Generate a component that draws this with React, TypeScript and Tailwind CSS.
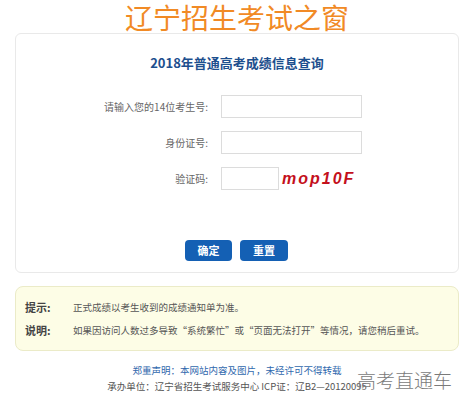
import React from "react";

const cjk = { fontFamily: '"Microsoft YaHei", "Noto Sans CJK SC", sans-serif' };

function Field({ label, inputClass }: { label: string; inputClass: string }) {
  return (
    <div className="flex h-[23px] items-center">
      <div className="w-[205px] pr-[13px] text-right text-[10px] text-[#666]">{label}</div>
      <div className={`h-[23px] border border-[#dcdcdc] bg-white ${inputClass}`} />
    </div>
  );
}

export default function App() {
  return (
    <div className="relative h-[408px] w-[474px] overflow-hidden bg-white" style={cjk}>
      {/* Header */}
      <div className="pt-[1px] text-center text-[28px] leading-[32px] text-[#f18a25]">辽宁招生考试之窗</div>

      {/* Query card */}
      <div className="mx-[15px] h-[240px] rounded-[6px] border border-[#e9e9e9] bg-white">
        <div className="pt-[19px] text-center text-[13px] font-bold leading-[20px] text-[#1d4f8e]">
          2018年普通高考成绩信息查询
        </div>
        <div className="mt-[22px] flex flex-col gap-[13px]">
          <Field label="请输入您的14位考生号:" inputClass="w-[141px]" />
          <Field label="身份证号:" inputClass="w-[141px]" />
          <div className="flex h-[23px] items-center">
            <div className="w-[205px] pr-[13px] text-right text-[10px] text-[#666]">验证码:</div>
            <div className="h-[23px] w-[58px] border border-[#dcdcdc] bg-white" />
            <span
              className="ml-[3px] text-[16px] font-bold italic tracking-[2px] text-[#c4101c]"
              style={{ fontFamily: '"Liberation Sans", Arial, sans-serif' }}
            >
              mop10F
            </span>
          </div>
        </div>
        <div className="mt-[50px] flex justify-center gap-[8px] pr-[1px]">
          <button className="h-[21px] w-[47px] rounded-[4px] bg-[#1460b4] text-[11px] font-bold text-white">确定</button>
          <button className="h-[21px] w-[48px] rounded-[4px] bg-[#1460b4] text-[11px] font-bold text-white">重置</button>
        </div>
      </div>

      {/* Notice */}
      <div className="mx-[15px] mt-[13px] flex h-[65px] flex-col justify-center gap-[7px] rounded-[8px] border border-[#ebebc8] bg-[#fdfde6] text-[9.5px] leading-[16px] text-[#555]">
        <div className="flex">
          <span className="w-[57px] pl-[9px] text-[11px] font-bold text-[#444]">提示:</span>
          <span>正式成绩以考生收到的成绩通知单为准。</span>
        </div>
        <div className="flex">
          <span className="w-[57px] pl-[9px] text-[11px] font-bold text-[#444]">说明:</span>
          <span>如果因访问人数过多导致“系统繁忙”或“页面无法打开”等情况，请您稍后重试。</span>
        </div>
      </div>

      {/* Footer */}
      <div className="mt-[11px] text-center text-[9.5px] leading-[16px]">
        <div className="text-[#2f68ad]">郑重声明：本网站内容及图片，未经许可不得转载</div>
        <div className="text-[#555]">承办单位：辽宁省招生考试服务中心 ICP证：辽B2—20120095</div>
      </div>

      {/* Watermark */}
      <div className="absolute left-[357px] top-[366px] text-[19px] font-light leading-[28px] text-[#7a7a7a]">
        高考直通车
      </div>
    </div>
  );
}
